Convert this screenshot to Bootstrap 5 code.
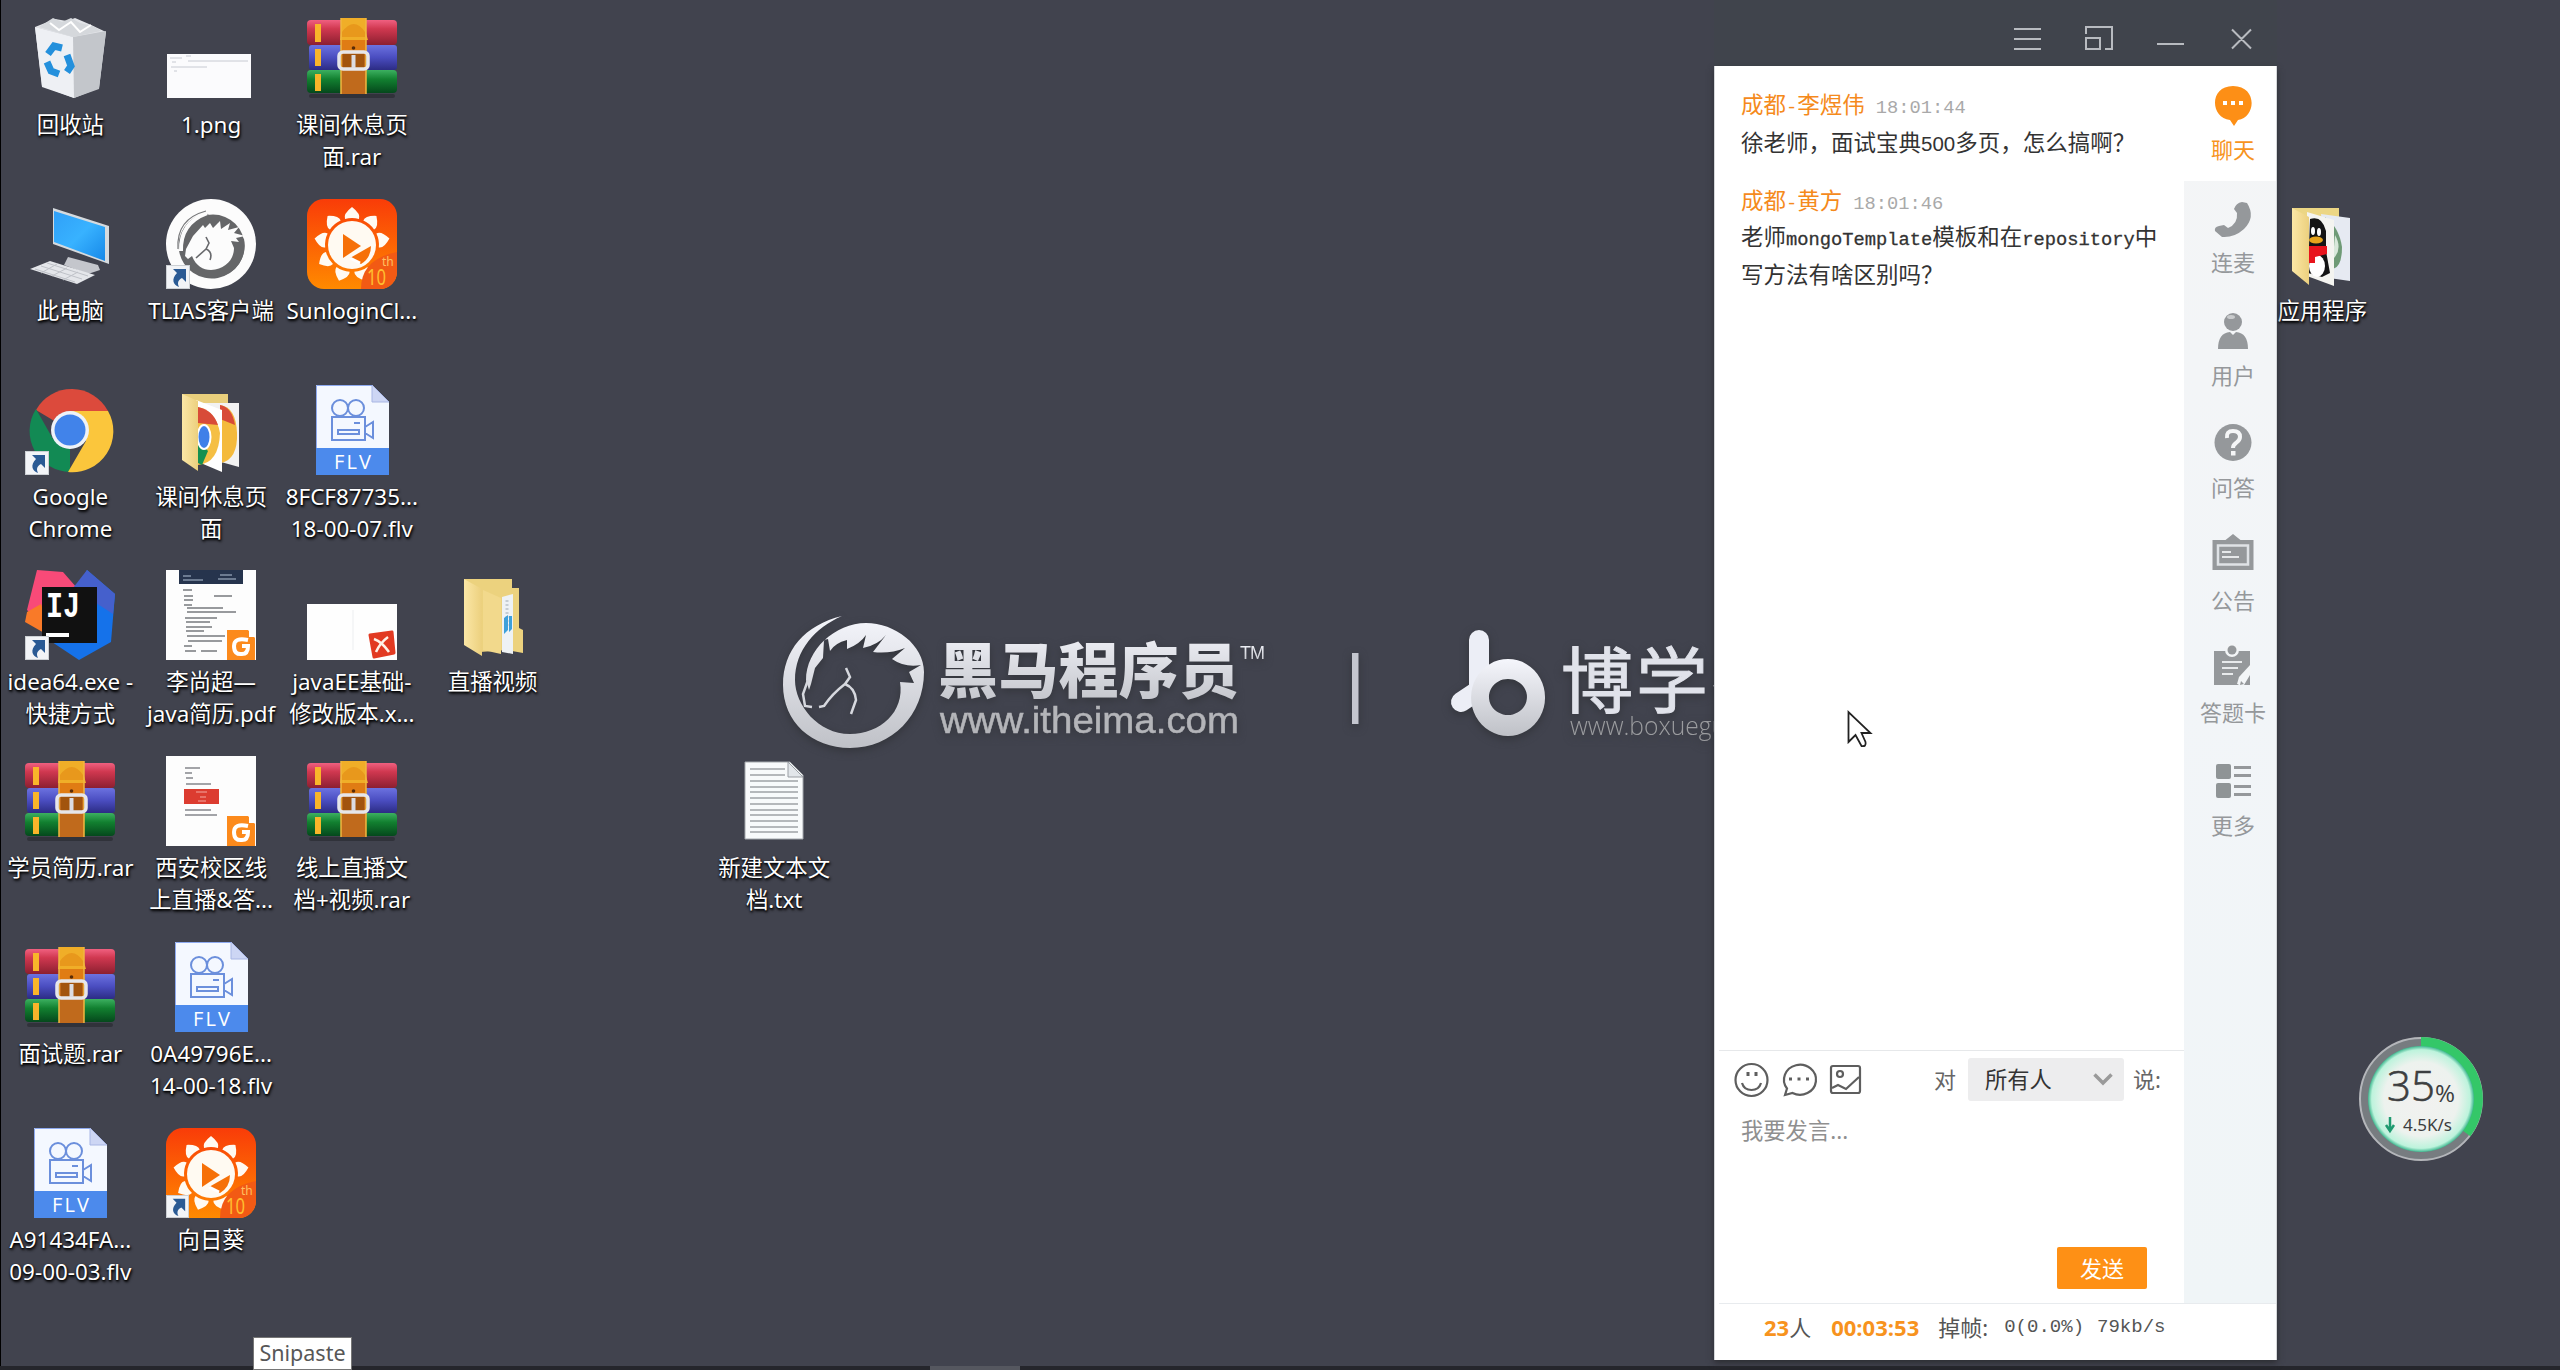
<!DOCTYPE html>
<html lang="zh-CN">
<head>
<meta charset="utf-8">
<title>Desktop</title>
<link rel="stylesheet" href="https://cdn.jsdelivr.net/npm/bootstrap@5.3.0/dist/css/bootstrap.min.css">
<style>
html,body{height:1370px}
body{width:2560px;background:#41434e;font-family:"Noto Sans","Noto Sans CJK SC",sans-serif;overflow:hidden}
.desk{width:2560px;height:1370px;box-shadow:inset 1px 0 #000}
.wall{left:0;top:0}
.icons{display:grid;grid-template-columns:repeat(17,140.75px);grid-template-rows:repeat(7,185.8px)}
.shortcut{padding-top:13px;color:#fff;font-size:22.4px;line-height:32px;text-shadow:1px 2px 3px #000,0 1px 2px #000}
.shortcut svg{width:90px;height:90px;flex:none;margin-bottom:6px;text-shadow:none}
.shortcut span{white-space:nowrap}
.taskbar{left:0;right:0;bottom:0;height:4px;background:#25262c}
.taskbar i{display:block;margin-left:930px;width:90px;height:4px;background:#55575f}
.tip{left:253px;top:1337px;width:99px;height:33px;background:#fff;border:1px solid #767676;color:#575757;font-size:21.5px;line-height:30px}
.win{left:1714px;top:0;width:563px;height:1360px}
.wtitle{height:66px;background:#40444c;padding:0 25px 0 0;margin-top:0}
.wbody{background:#fff;border-left:1px solid #d5d7da;border-right:1px solid #d5d7da;box-shadow:0 3px 6px #2d2e33}
.wside{width:92px;background:linear-gradient(#f4f5f6,#f2f5f8 50%,#f0f5f7)}
.tab{height:112.6px;color:#95989b;font-size:22px;line-height:30px;padding:12px 0 0 6px}
.tab svg{width:46px;height:50px}
.tab.first{height:115px;background:#fff;color:#f7941e;padding-top:15px}
.tab.first svg{margin-bottom:3px}
.tab svg{margin-bottom:4px}
.chat{padding:23px 0 0 26px;height:984px;font-size:22.5px;line-height:37.5px;color:#333;font-family:"Liberation Mono","Noto Sans CJK SC",monospace}
.chat .lat{font-size:18.75px}
.chat .words{margin-top:-3px}
.chat .entry+.entry{margin-top:21px}
.chat .words .lat{-webkit-text-stroke:.3px #333;font-size:18.75px}
.chat .num{font-size:20.5px;font-family:"Liberation Sans",sans-serif}
.nick{color:#f58a1c}
.tm{color:#a9a9a9;font-size:18.75px;margin-left:11px}
.tools{height:62px;border-top:1px solid #e6e8ea;margin-left:4px;padding:0 0 4px 14px;color:#666;font-size:22px}
.tools svg{flex:none}
.pick{width:156px;height:43px;background:#ededee;border-radius:3px;color:#333;padding:0 11px 0 17px;font-size:22.3px}
.say{height:191px;padding-left:26px;color:#8f8f8f;font-size:22.3px;line-height:38px}
.send{position:relative;width:90px;height:42px;background:#fe9015;border:0;border-radius:2px;color:#fff;font-size:22px;line-height:42px;padding:0;margin:0 37px 14px 0}
.stat{height:57px;border-top:1px solid #e8ebee;margin-left:4px;padding:0 0 9px 45px;font-size:22px;color:#555;white-space:nowrap}
.stat b{color:#f7931e;font-family:"Open Sans",sans-serif}
.stat .m{font-family:"Liberation Mono","Noto Sans CJK SC",monospace;font-size:19px}
.ball{left:2358px;top:1036px}
.cursor-arrow{left:1846px;top:708px}
</style>
<script src="https://cdn.jsdelivr.net/npm/bootstrap@5.3.0/dist/js/bootstrap.bundle.min.js"></script>
</head>
<body>
<svg width="0" height="0" class="position-absolute">
<defs>
<linearGradient id="gr" x1="0" y1="0" x2="0" y2="1"><stop offset="0" stop-color="#f06080"/><stop offset=".35" stop-color="#d03850"/><stop offset="1" stop-color="#8c1f30"/></linearGradient>
<linearGradient id="gb" x1="0" y1="0" x2="0" y2="1"><stop offset="0" stop-color="#6c72e0"/><stop offset=".5" stop-color="#4a4dc0"/><stop offset="1" stop-color="#2c2c84"/></linearGradient>
<linearGradient id="gg" x1="0" y1="0" x2="0" y2="1"><stop offset="0" stop-color="#3cb060"/><stop offset=".4" stop-color="#128030"/><stop offset="1" stop-color="#05481c"/></linearGradient>
<linearGradient id="gs" x1="0" y1="0" x2="0" y2="1"><stop offset="0" stop-color="#f93c08"/><stop offset="1" stop-color="#ff8a00"/></linearGradient>
<linearGradient id="gy" x1="0" y1="0" x2="1" y2="0"><stop offset="0" stop-color="#fbe7a6"/><stop offset="1" stop-color="#ecd07e"/></linearGradient>
<linearGradient id="gl" x1="0" y1="0" x2="0" y2="1"><stop offset="0" stop-color="#f5f6fc"/><stop offset="1" stop-color="#bfc1c7"/></linearGradient>
<linearGradient id="gm" x1="0" y1="0" x2="1" y2="1"><stop offset="0" stop-color="#30a0f8"/><stop offset=".5" stop-color="#38b2ff"/><stop offset="1" stop-color="#1688e8"/></linearGradient>
<symbol id="arrow" viewBox="0 0 24 24"><rect x=".5" y=".5" width="23" height="23" fill="#f2f4f7" stroke="#ccd0d4"/><path d="M7 4h13v13l-4-4c-4 2-5 5-3 9-6-2-8-8-2-14z" fill="#2a5a94"/></symbol>
<symbol id="rar" viewBox="0 0 90 90">
<rect x="2" y="81" width="86" height="4" rx="2" fill="#000" opacity=".25"/>
<rect x="0" y="7" width="90" height="25" rx="4" fill="url(#gr)"/><rect x="2" y="32" width="88" height="25" rx="3" fill="url(#gb)"/><rect x="0" y="57" width="90" height="23" rx="4" fill="url(#gg)"/>
<path d="M8 11h6v18H8zM8 36h6v17H8zM8 61h6v17H8z" fill="#f9b52a"/>
<path d="M34 5h25v76H34z" fill="#c06a1c"/><path d="M34 5h25v15l2 7H33l1-7z" fill="#f0ae28"/><path d="M35 19q12-16 23 0v5H35z" fill="#e8981c"/><path d="M34 27h25v12H34z" fill="#e07c14"/><path d="M34 5v76M59 5v76" stroke="#efb840" stroke-width="1.5"/>
<circle cx="46.500" cy="35" r="1.800" fill="#5a2c08"/><path d="M36 41h21v14H36z" fill="#a2540e"/><rect x="32" y="39" width="29" height="17" rx="4" fill="none" stroke="#e6e6ea" stroke-width="3.500"/><path d="M46.500 42v13" stroke="#dcdce2" stroke-width="4"/></symbol>
<symbol id="flv" viewBox="0 0 90 90"><path d="M9 0h56l17 17v73H9z" fill="#f4f8ff"/><path d="M65 0l17 17H65z" fill="#cdd6f4" stroke="#a8b6e4" stroke-width="1"/><path d="M9.500 63V.5H65" fill="none" stroke="#8eaaf0"/><path d="M9 63h73v27H9z" fill="#4c8aec"/>
<g fill="none" stroke="#6b8fdc" stroke-width="2"><circle cx="33" cy="23" r="8"/><circle cx="49" cy="23" r="8"/><path d="M25 32h33v23H25zM31 45h21v4H31zM47 38h6M58 42l8-5v16l-8-5"/></g>
<text x="45.500" y="84" fill="#fff" font-size="20" text-anchor="middle" textLength="37" font-family="Open Sans">FLV</text></symbol>
<symbol id="sun" viewBox="0 0 90 90"><rect width="90" height="90" rx="17" fill="url(#gs)"/>
<g fill="#fffaf2"><g id="pt"><path d="M38 20q-2-5 7-12q9 7 7 12q-7-2-14 0z"/></g>
<use href="#pt" transform="rotate(40 45 46)"/><use href="#pt" transform="rotate(80 45 46)"/><use href="#pt" transform="rotate(160 45 46)"/><use href="#pt" transform="rotate(200 45 46)"/><use href="#pt" transform="rotate(240 45 46)"/><use href="#pt" transform="rotate(280 45 46)"/><use href="#pt" transform="rotate(320 45 46)"/><circle cx="45" cy="46" r="24"/></g>
<path d="M36 35v24l18-12z" fill="#f67008"/><path d="M43 59l21-12q0 12-10 18z" fill="#f67008"/><path d="M43 59l10 5" stroke="#fff" stroke-width="3"/>
<path d="M90 53v20a17 17 0 0 1-17 17H54q0-30 36-37z" fill="#f25a14"/><text x="60" y="86" font-size="22" fill="#ffc030" textLength="19" lengthAdjust="spacingAndGlyphs" font-family="Noto Sans">10</text><text x="75" y="67" font-size="12" fill="#ffc060" font-family="Noto Sans">th</text></symbol>
<symbol id="gdoc" viewBox="0 0 28 30"><path d="M0 0h21l7 8v22H0z" fill="#fc8a1c"/><path d="M22 0v7h6" fill="#fff"/><path d="M21 10q-14-3-14 6t8 8q6 0 6-8h-6" fill="none" stroke="#fff" stroke-width="4"/></symbol>
</defs></svg>

<div class="desk position-relative overflow-hidden">
<!-- wallpaper logos -->
<svg class="wall position-absolute" width="2560" height="1370" viewBox="0 0 2560 1370">
<g style="filter:drop-shadow(0 3px 4px #33353b)">
<path fill="url(#gl)" d="M842 616C805 625 783 650 783 685C783 722 812 748 850 748C892 748 924 715 924 672C924 645 895 623 866 623C835 623 806 650 806 680L809 690L811 684L815 668L823 658L824 640L828 639L830 651Q835 643 847 640L847 649Q860 644 866 635L863 648Q878 645 886 635L873 652Q890 654 905 648L892 659Q905 668 921 665L909 672L914 683L900 682C905 712 880 734 850 734C818 734 795 705 795 680C795 650 815 628 842 616Z"/>
<path d="M808 680L803 694L805 706L812 707M846 668L850 677L845 684Q832 694 824 706L819 707M845 684Q855 688 856 700L851 714" fill="none" stroke="#d6d8de" stroke-width="2.500"/>
<g fill="url(#gl)" font-family="Noto Sans CJK SC">
<text x="938" y="693" font-size="60" font-weight="900" textLength="301">黑马程序员</text>
<text x="1240" y="659" font-size="18" textLength="25" font-family="Liberation Sans">TM</text></g>
<text x="940" y="733" font-size="36" textLength="299" lengthAdjust="spacingAndGlyphs" font-family="Liberation Sans" fill="#b4b5b9" stroke="#b4b5b9" stroke-width=".5">www.itheima.com</text>
<rect x="1352" y="653" width="6.500" height="71" fill="#c4c6cf"/>
<path d="M1479 640V690M1479 640V690L1461 702" fill="none" stroke="#eceef6" stroke-width="20" stroke-linecap="round" stroke-linejoin="round"/>
<path fill="url(#gl)" fill-rule="evenodd" d="M1508 659a37 38.500 0 1 0 .1 0zM1508 679a19 18 0 1 1-.1 0z"/>
<text x="1561" y="707" font-size="72" fill="#e0e2ea" font-family="Noto Sans CJK SC" font-weight="400" textLength="222" stroke="#e0e2ea">博学谷</text>
<text x="1570" y="735" font-size="25.500" fill="#9b9c9f" font-family="Open Sans" font-weight="300" textLength="210" lengthAdjust="spacingAndGlyphs">www.boxuegu.com</text>
</g></svg>

<div class="icons position-relative" id="grid">
<div class="shortcut d-flex flex-column align-items-center text-center" style="grid-area:1/1"><svg viewBox="0 0 90 90"><path d="M10 14L30 6l12 2 8-3 14 6 17 8-7 56-25 10-32-12z" fill="#e2e4e8"/><path d="M10 14l38 10 33-6-7 58-25 9z" fill="#c3c6cb"/><path d="M10 14l38 10 1 61-32-11z" fill="#eef0f4"/><path d="M14 14L28 5l9 4 9-4 9 5 13 3 8 5-28 6z" fill="#d5d8dc"/><path d="M25 10l9 7 12-8 9 10 11-7" fill="none" stroke="#fff" stroke-width="2"/><g fill="none" stroke="#2490dc" stroke-width="7"><path d="M23 41l6-8 8 2M42 42l4 11-4 6M34 61l-8-3-4-9"/></g></svg><span>回收站</span></div>
<div class="shortcut d-flex flex-column align-items-center text-center" style="grid-area:1/2"><svg viewBox="0 0 90 90"><path d="M1 41h84v44H1z" fill="#fbfbfd"/><path d="M4 45h12M20 43h5M5 54h36M6 49h4M8 58h3M22 48h60" stroke="#c7cad2"/></svg><span>1.png</span></div>
<div class="shortcut d-flex flex-column align-items-center text-center" style="grid-area:1/3"><svg><use href="#rar"/></svg><span>课间休息页<br>面.rar</span></div>
<div class="shortcut d-flex flex-column align-items-center text-center" style="grid-area:2/1"><svg viewBox="0 0 90 90"><path d="M28 9l56 18v38l-56-20z" fill="#d5dade"/><path d="M29 12l51 16v34l-51-19z" fill="url(#gm)"/><path d="M43 58l30 8 2 5-12 4-24-9z" fill="#c4c6cc"/><path d="M5 70l20-8 45 14-18 9z" fill="#e4e6ea"/><path d="M10 70l40 13M16 67l41 13M22 64l41 13M16 74l16-9M27 77l15-8M38 81l15-8" stroke="#bfc2c8"/></svg><span>此电脑</span></div>
<div class="shortcut d-flex flex-column align-items-center text-center" style="grid-area:2/2"><svg viewBox="0 0 90 90"><circle cx="45" cy="45" r="45" fill="#fcfcfc"/><path d="M40 14A33 33 0 1 0 78 40" fill="#656668"/><circle cx="47" cy="47" r="31.500" fill="#656668"/><path d="M41 14Q14 24 15 52" fill="none" stroke="#fcfcfc" stroke-width="4"/><path d="M40 12Q10 20 12 50" fill="none" stroke="#77787a" stroke-width="1.200"/><path d="M27 37L20 50l-1 7 3 3 4-3C30 67 37 71 45 71 59 70 68 61 68 49l-3-7 8 1-3-4 9-2-11-3 5-6-11 3 2-7-9 6-1-8-7 7-3-5-5 5-2-3z" fill="#fcfcfc"/><path d="M40 38l3 6-3 6-10 9M40 50q7 3 4 11" fill="none" stroke="#68696c" stroke-width="1.600"/><use href="#arrow" x="0" y="66" width="24" height="24"/></svg><span>TLIAS客户端</span></div>
<div class="shortcut d-flex flex-column align-items-center text-center" style="grid-area:2/3"><svg><use href="#sun"/></svg><span>SunloginCl...</span></div>
<div class="shortcut d-flex flex-column align-items-center text-center" style="grid-area:3/1"><svg viewBox="0 0 90 90"><path d="M46 46L11 25A41 41 0 0 1 83 26z" fill="#dc4a3c"/><path d="M45 45l0 42A41 41 0 0 1 11 24l17 30z" fill="#128a54"/><path d="M45 26h38A41 41 0 0 1 43 87l18-31z" fill="#fbc63c"/><circle cx="45" cy="45" r="19" fill="#eef2f8"/><circle cx="45" cy="45" r="15.500" fill="#4183ea"/><use href="#arrow" x="0" y="66" width="24" height="24"/></svg><span>Google<br>Chrome</span></div>
<div class="shortcut d-flex flex-column align-items-center text-center" style="grid-area:3/2"><svg viewBox="0 0 90 90"><path d="M16 9h46v60H16z" fill="#e9cf7c"/><path d="M36 18h37v64l-18-5z" fill="#f2f2f2"/><path d="M54 20q16 2 17 28t-16 30z" fill="#f4ba3c"/><path d="M54 20q12 2 15 20L54 34z" fill="#d84b38"/><path d="M30 15l26 10v62l-26-11z" fill="#fff"/><path d="M32 22q18 4 22 26-1 30-22 32z" fill="#f5bf44"/><path d="M32 22q15 3 20 18l-20-2z" fill="#d84b38"/><path d="M32 56l10 10-6 14-4-2z" fill="#159050"/><ellipse cx="38" cy="52" rx="6.500" ry="12" fill="#3f80e8" stroke="#fff" stroke-width="2"/><path d="M16 9l16 7v70L16 75z" fill="url(#gy)"/></svg><span>课间休息页<br>面</span></div>
<div class="shortcut d-flex flex-column align-items-center text-center" style="grid-area:3/3"><svg><use href="#flv"/></svg><span>8FCF87735...<br>18-00-07.flv</span></div>
<div class="shortcut d-flex flex-column align-items-center text-center" style="grid-area:4/1"><svg viewBox="0 0 90 90"><path d="M12 0l26 2 14 16-12 60-38-38z" fill="#f84a78"/><path d="M2 42l14-8 12 34L0 52z" fill="#f97a28"/><path d="M62 0l28 24-4 48-32 18-30-20z" fill="#1572ea"/><path d="M62 0l28 24-2 20-40-26z" fill="#4560cc"/><path d="M17 17h55v56H17z" fill="#111"/><text x="21" y="47" font-size="36" font-weight="700" fill="#fff" font-family="Liberation Mono" textLength="34" lengthAdjust="spacingAndGlyphs">IJ</text><path d="M21 63h23v4H21z" fill="#fff"/><use href="#arrow" x="0" y="66" width="24" height="24"/></svg><span>idea64.exe -<br>快捷方式</span></div>
<div class="shortcut d-flex flex-column align-items-center text-center" style="grid-area:4/2"><svg viewBox="0 0 90 90"><path d="M0 0h90v90H0z" fill="#fdfdfd"/><path d="M13 0h64v14H13z" fill="#26344d"/><path d="M17 6h8M54 5h12M52 9h18M17 10h20" stroke="#8492a8" stroke-width="1.500"/><path d="M17 20h9M18 26h9M48 26h18M18 30h9M18 35h8M21 38h36M21 42h49M19 48h32M20 52h24M20 57h26M20 61h18M21 66h38M22 71h34M18 76h8M19 81h11M35 81h16" stroke="#77797e" stroke-width="1.500"/><use href="#gdoc" x="60" y="60" width="30" height="30"/></svg><span>李尚超—<br>java简历.pdf</span></div>
<div class="shortcut d-flex flex-column align-items-center text-center" style="grid-area:4/3"><svg viewBox="0 0 90 90"><path d="M0 34h90v56H0z" fill="#fefefe"/><path d="M46 40v40" stroke="#eceef0"/><path d="M63 65l22-3 2 21-20 4z" fill="#e23a22" stroke="#e23a22" stroke-width="3" stroke-linejoin="round"/><path d="M67 69q8 3 15 13M81 67q-8 6-12 15" stroke="#fff2e8" stroke-width="2.500" fill="none"/></svg><span>javaEE基础-<br>修改版本.x...</span></div>
<div class="shortcut d-flex flex-column align-items-center text-center" style="grid-area:4/4"><svg viewBox="0 0 90 90"><path d="M16 9h48v9h7v40l4 2v23l-16-3-27 2z" fill="#ecd27e"/><path d="M54 27l11-3v60l-11-2z" fill="#eef2f5"/><path d="M59 30v28" stroke="#c6cdd3" stroke-width="3" stroke-dasharray="2 2"/><path d="M56 48l4-3v15l-4 4zM61 46h3v13l-3 3z" fill="#3da0da"/><path d="M35 20l18 8v56l-18-4z" fill="#f2d98c"/><path d="M16 9l18 10v67L16 75z" fill="url(#gy)"/></svg><span>直播视频</span></div>
<div class="shortcut d-flex flex-column align-items-center text-center" style="grid-area:5/1"><svg><use href="#rar"/></svg><span>学员简历.rar</span></div>
<div class="shortcut d-flex flex-column align-items-center text-center" style="grid-area:5/2"><svg viewBox="0 0 90 90"><path d="M0 0h90v90H0z" fill="#fdfdfd"/><path d="M19 12h15M19 17h7M20 22h7M20 28h25M19 54h26M19 59h32" stroke="#85878c" stroke-width="1.500"/><path d="M18 33h35v15H18z" fill="#dc3c30"/><path d="M30 36h11M34 41h6M32 45h8" stroke="#f4a8a0"/><use href="#gdoc" x="60" y="60" width="30" height="30"/></svg><span>西安校区线<br>上直播&amp;答...</span></div>
<div class="shortcut d-flex flex-column align-items-center text-center" style="grid-area:5/3"><svg><use href="#rar"/></svg><span>线上直播文<br>档+视频.rar</span></div>
<div class="shortcut d-flex flex-column align-items-center text-center" style="grid-area:5/6"><svg viewBox="0 0 90 90"><path d="M16 6h45l13 13v64H16z" fill="#f8fafb" stroke="#a4a8ac"/><path d="M59 6v15h15z" fill="#e2e6ea" stroke="#9a9ea4"/><path d="M21 13h35M21 19h35M21 25h48M21 31h48M21 36h48M21 42h48M21 48h48M21 54h48M21 59h48M21 65h48M21 71h48M21 76h48" stroke="#9fa3a7" stroke-width="1.500"/></svg><span>新建文本文<br>档.txt</span></div>
<div class="shortcut d-flex flex-column align-items-center text-center" style="grid-area:6/1"><svg><use href="#rar"/></svg><span>面试题.rar</span></div>
<div class="shortcut d-flex flex-column align-items-center text-center" style="grid-area:6/2"><svg><use href="#flv"/></svg><span>0A49796E...<br>14-00-18.flv</span></div>
<div class="shortcut d-flex flex-column align-items-center text-center" style="grid-area:7/1"><svg><use href="#flv"/></svg><span>A91434FA...<br>09-00-03.flv</span></div>
<div class="shortcut d-flex flex-column align-items-center text-center" style="grid-area:7/2"><svg viewBox="0 0 90 90"><use href="#sun"/><use href="#arrow" x="0" y="67" width="23" height="23"/></svg><span>向日葵</span></div>
<div class="shortcut d-flex flex-column align-items-center text-center" style="grid-area:2/17"><svg viewBox="0 0 90 90"><path d="M15 9h47v60H15z" fill="#ecd684"/><path d="M44 15l29 4v63l-21-3z" fill="#e6eaf2"/><path d="M48 18q14 10 17 30 0 20-9 22z" fill="#6f9a76"/><path d="M58 36q8 14-2 24z" fill="#d8e8da"/><path d="M30 13l27 8v66l-27-10z" fill="#f4f4f0"/><path d="M33 20q12-4 16 12v20l4 22-8 4-14-4z" fill="#141414"/><ellipse cx="40" cy="67" rx="8" ry="11" fill="#fff"/><path d="M31 47h19v8l-12 3v6h-7z" fill="#e8141c"/><ellipse cx="39" cy="41" rx="7" ry="3.500" fill="#e6a41c"/><ellipse cx="36" cy="32" rx="2" ry="4" fill="#fff"/><ellipse cx="42" cy="33" rx="2" ry="4" fill="#fff"/><path d="M15 9l17 9v68L15 72z" fill="url(#gy)"/></svg><span>应用程序</span></div>
</div>

<div class="taskbar position-absolute"><i></i></div>
<div class="tip position-absolute text-center">Snipaste</div>

<!-- live chat window -->
<div class="win position-absolute d-flex flex-column">
<div class="wtitle d-flex justify-content-end">
<svg width="240" height="66" viewBox="2012 0 240 66" fill="none" stroke="#b8bbc0" stroke-width="2"><path d="M2014 29h27M2014 39h27M2014 49h27M2086 34v-7h26v22h-7M2086 38h14v11h-14zM2157 44h27M2232 29.500l19 19M2251 29.500l-19 19"/></svg>
</div>
<div class="wbody d-flex flex-column flex-grow-1">
<div class="d-flex">
<div class="flex-grow-1">
<div class="chat">
<div class="entry"><div><span class="nick">成都<span class="lat">-</span>李煜伟</span><span class="tm">18:01:44</span></div>
<div class="words">徐老师，面试宝典<span class="num">500</span>多页，怎么搞啊？</div></div>
<div class="entry"><div><span class="nick">成都<span class="lat">-</span>黄方</span><span class="tm">18:01:46</span></div>
<div class="words">老师<span class="lat">mongoTemplate</span>模板和在<span class="lat">repository</span>中<br>写方法有啥区别吗？</div></div>
</div>
<div class="tools d-flex align-items-center">
<svg width="130" height="38" viewBox="1733 1060 130 38" fill="none" stroke="#5e5e5e" stroke-width="2.200"><circle cx="1751.500" cy="1079" r="16"/><path d="M1742 1082q2 7 9.500 7t9.500-7"/><path d="M1748 1071v4M1756 1071v4" stroke-width="3"/><path d="M1785 1094l2-6.500a16 15 0 1 1 5.500 4.500z"/><path d="M1789 1078h3M1797.500 1078h3M1806 1078h3" stroke-width="3"/><rect x="1831" y="1065" width="29" height="27" rx="2"/><circle cx="1840" cy="1073" r="3"/><path d="M1832 1087l6-3 8 4 13-12"/></svg>
<span style="margin-left:71px">对</span>
<div class="pick d-flex align-items-center justify-content-between" style="margin-left:12px"><span>所有人</span><svg width="20" height="13" viewBox="0 0 20 13" fill="none" stroke="#9a9a9a" stroke-width="3.500"><path d="M1.500 1.500l8.500 8.500 8.500-8.500"/></svg></div>
<span style="margin-left:9px">说:</span>
</div>
<div class="say d-flex flex-column justify-content-between"><span>我要发言...</span><button class="send align-self-end">发送</button></div>
</div>
<div class="wside d-flex flex-column">
<div class="tab first d-flex flex-column align-items-center"><svg viewBox="0 0 46 50"><path d="M23 5c25 0 23 32 5 34l-4 6-4-6C0 37-1 5 23 5z" fill="#fd8f16"/><path d="M13 22h4M21 22h4M29 22h4" stroke="#fff" stroke-width="4"/></svg><span>聊天</span></div>
<div class="tab d-flex flex-column align-items-center"><svg viewBox="0 0 46 50"><path d="M32 9l5 1q9 14-3 26-10 9-22 8L5 38q-1-4 4-5l5-1 4 3q10-4 9-15l-3-4q2-6 8-7z" fill="#95989b"/></svg><span>连麦</span></div>
<div class="tab d-flex flex-column align-items-center"><svg viewBox="0 0 46 50"><circle cx="23" cy="16" r="9" fill="#95989b"/><path d="M8 43q0-16 12-17l3 3 3-3q12 1 12 17z" fill="#95989b"/><ellipse cx="21" cy="11" rx="4" ry="2" fill="#c9cbcd"/></svg><span>用户</span></div>
<div class="tab d-flex flex-column align-items-center"><svg viewBox="0 0 46 50"><circle cx="23" cy="24.500" r="18.500" fill="#95989b"/><path d="M17 20q-1-7 6-7t7 6q0 3-4 6-3 2-3 5" fill="none" stroke="#f5f6f7" stroke-width="4"/><path d="M21 33h4.500v4.500H21z" fill="#f5f6f7"/></svg><span>问答</span></div>
<div class="tab d-flex flex-column align-items-center"><svg viewBox="0 4 46 50"><path d="M2.500 13h13l7.500-6 7.500 6h13v30h-41z" fill="#95989b"/><path d="M8 18.500h30v19H8z" fill="none" stroke="#dfe2e6" stroke-width="2.500"/><path d="M12 25h9M12 30h17" stroke="#e6e8ea" stroke-width="2"/></svg><span>公告</span></div>
<div class="tab d-flex flex-column align-items-center"><svg viewBox="0 3 46 50"><path d="M4 11h36v20l-12 14H4z" fill="#95989b"/><circle cx="22" cy="10" r="7" fill="#f3f5f7"/><circle cx="22" cy="10" r="4.500" fill="#95989b"/><path d="M12 22h20M12 28h16M12 34h11" stroke="#e8eaec" stroke-width="2"/><path d="M27 44l2-7 12-13v9l-8 12z" fill="#f3f5f7"/><path d="M40 35v10h-6zM30 45l1-4 3 3z" fill="#95989b"/></svg><span>答题卡</span></div>
<div class="tab d-flex flex-column align-items-center"><svg viewBox="0 1 46 50"><rect x="6" y="9" width="15" height="15" rx="2" fill="#8f9496"/><rect x="6" y="28" width="15" height="15" rx="2" fill="#8f9496"/><path d="M24 12.500h17M24 20.500h17M24 31.500h17M24 39.500h17" stroke="#95989b" stroke-width="3"/></svg><span>更多</span></div>
</div>
</div>
<div class="stat d-flex align-items-center"><b>23</b><span>人</span><b style="margin-left:20px">00:03:53</b><span style="margin-left:19px;width:66px">掉帧:</span><span class="m">0(0.0%)</span><span class="m" style="margin-left:13px">79kb/s</span></div>
</div>
</div>

<svg class="cursor-arrow position-absolute" width="28" height="42" viewBox="0 0 28 42"><path d="M2.500 4v30l7-7 6 11q5 1 4-4l-4-9h9z" fill="#fff" stroke="#222" stroke-width="1.800"/></svg>

<!-- system load ball -->
<svg class="ball position-absolute" width="126" height="126" viewBox="0 0 126 126">
<defs><radialGradient id="gball"><stop offset="0" stop-color="#f2f1f0"/><stop offset=".7" stop-color="#edf2ee"/><stop offset=".93" stop-color="#bdf3dc"/><stop offset="1" stop-color="#40b890"/></radialGradient></defs>
<circle cx="63" cy="63" r="61" fill="#777c80" stroke="#b4b6ba" stroke-width="2"/><path d="M63 6.500A56.500 56.500 0 0 1 108 97" fill="none" stroke="#34c768" stroke-width="11"/><circle cx="63" cy="63" r="53" fill="url(#gball)"/>
<text x="29" y="65" font-size="43" textLength="48" lengthAdjust="spacingAndGlyphs" fill="#3c3e40" stroke="#3c3e40" stroke-width=".6" font-family="Open Sans" font-weight="300">35</text><text x="77" y="66" font-size="23" textLength="20" lengthAdjust="spacingAndGlyphs" fill="#3c3e40" font-family="Open Sans">%</text>
<path d="M32 81v13M28 89l4 6 4-6" fill="none" stroke="#1f9a70" stroke-width="2.500"/><text x="45" y="95" font-size="17" textLength="49" lengthAdjust="spacingAndGlyphs" fill="#3c3e40" font-family="Noto Sans">4.5K/s</text></svg>
</div>
</body>
</html>
